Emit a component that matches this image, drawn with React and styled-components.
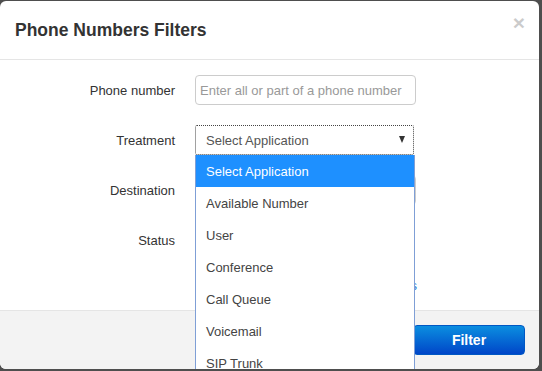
import styled, { createGlobalStyle } from "styled-components"

const GlobalStyle = createGlobalStyle`
    html, body {
        margin: 0;
        padding: 0;
        background-color: #4e4e4e;
        font-family: "Liberation Sans", Arial, sans-serif;
    }
    * {
        box-sizing: border-box;
    }
`

const options = ["Select Application", "Available Number", "User", "Conference", "Call Queue", "Voicemail", "SIP Trunk"]

function Field({ label, children }) {
    return (
        <Row>
            <Label>{label}</Label>
            <Control>{children}</Control>
        </Row>
    )
}

export default function App() {
    return (
        <>
            <GlobalStyle />
            <Modal>
                <Header>
                    <Title>Phone Numbers Filters</Title>
                    <Close>×</Close>
                </Header>
                <Body>
                    <Field label = "Phone number">
                        <Input placeholder = "Enter all or part of a phone number" />
                    </Field>
                    <Field label = "Treatment">
                        <Select focused width = {219}>
                            <span>Select Application</span>
                            <Arrow />
                        </Select>
                        <Dropdown>
                            {options.map((value, index) => (
                                <Option key = {index} active = {index === 0 ? 1 : 0}>{value}</Option>
                            ))}
                        </Dropdown>
                    </Field>
                    <Field label = "Destination">
                        <Select width = {221}>
                            <span />
                            <Arrow />
                        </Select>
                    </Field>
                    <Field label = "Status">
                        <Select width = {200}>
                            <span />
                            <Arrow />
                        </Select>
                    </Field>
                    <LinkRow>
                        <span />
                        <Reset>Reset filters</Reset>
                    </LinkRow>
                </Body>
                <Footer>
                    <Button>Filter</Button>
                </Footer>
            </Modal>
        </>
    )
}

const Modal = styled.div`
    margin-top: 1px;
    width: 539px;
    height: 368px;
    background-color: white;
    border-radius: 6px;
    display: flex;
    flex-direction: column;
`
const Header = styled.div`
    height: 59px;
    padding: 15px;
    border-bottom: 1px solid #e5e5e5;
    display: flex;
    justify-content: space-between;
    align-items: flex-start;
`
const Title = styled.h4`
    margin: 0;
    font-size: 17.5px;
    line-height: 28px;
    font-weight: bold;
    color: #333;
`
const Close = styled.span`
    margin-top: -4px;
    margin-right: -1px;
    font-size: 21px;
    line-height: 1;
    font-weight: bold;
    color: #000;
    opacity: 0.2;
    cursor: pointer;
`
const Body = styled.div`
    padding: 15px;
    display: flex;
    flex-direction: column;
    gap: 20px;
`
const Row = styled.div`
    display: grid;
    grid-template-columns: 160px 221px;
    column-gap: 20px;
    align-items: center;
    height: 30px;
`
const Label = styled.label`
    text-align: right;
    font-size: 13px;
    color: #333;
`
const Control = styled.div`
    position: relative;
    height: 30px;
`
const Input = styled.input`
    width: 221px;
    height: 30px;
    padding: 0 4px;
    border: 1px solid #ccc;
    border-radius: 4px;
    font-family: "Liberation Sans", Arial, sans-serif;
    font-size: 13px;
    color: #555;
    outline: none;

    &::placeholder {
        color: #999;
    }
`
const Select = styled.div`
    width: ${p => p.width}px;
    height: 30px;
    padding: 0 8px 0 10px;
    border: 1px ${p => p.focused ? "dotted #444" : "solid #ccc"};
    border-radius: ${p => p.focused ? "2px" : "4px"};
    background-color: white;
    display: flex;
    justify-content: space-between;
    align-items: center;
    font-size: 13px;
    color: #555;
`
const Arrow = styled.span`
    width: 0;
    height: 0;
    border-left: 3.5px solid transparent;
    border-right: 3.5px solid transparent;
    border-top: 7px solid #333;
    margin-top: -1px;
`
const Dropdown = styled.div`
    position: absolute;
    top: 30px;
    left: 0;
    width: 220px;
    border: 1px solid #7f9fd6;
    border-top: none;
    background-color: white;
    z-index: 10;
`
const Option = styled.div`
    height: 32px;
    padding: 1px 10px 0;
    display: flex;
    align-items: center;
    font-size: 13px;
    color: ${p => p.active ? "white" : "#444"};
    background-color: ${p => p.active ? "#1e90ff" : "white"};
`
const LinkRow = styled.div`
    display: grid;
    grid-template-columns: 160px 222px;
    column-gap: 20px;
    height: 20px;
    align-items: center;
`
const Reset = styled.a`
    text-align: right;
    font-size: 13px;
    color: #2a7fd4;
`
const Footer = styled.div`
    margin-top: auto;
    padding: 14px 14px 14px 15px;
    border-top: 1px solid #e5e5e5;
    background-color: #f3f3f3;
    border-radius: 0 0 6px 6px;
    display: flex;
    justify-content: flex-end;
`
const Button = styled.button`
    width: 112px;
    height: 30px;
    border: 1px solid #0058c4;
    border-radius: 4px;
    background: linear-gradient(to bottom, #0b8ee0, #0046c8);
    color: white;
    font-family: "Liberation Sans", Arial, sans-serif;
    font-size: 14px;
    font-weight: bold;
    cursor: pointer;
`
